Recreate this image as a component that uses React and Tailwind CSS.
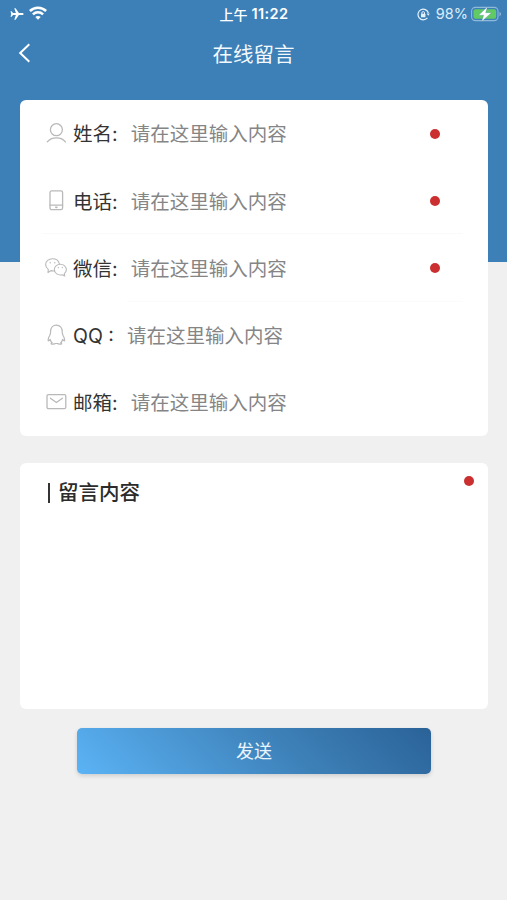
const iconProps = {
  fill: "none",
  stroke: "#b9b9b9",
  strokeWidth: 1.3,
  strokeLinecap: "round",
  strokeLinejoin: "round",
};

const UserIcon = () => (
  <svg width="22" height="22" viewBox="0 0 22 22" {...iconProps}>
    <circle cx="11.400" cy="6.700" r="6" />
    <path d="M2.300 18.900c2-2.700 5.100-4.100 9.100-4.100s7.100 1.400 9 4.100" />
  </svg>
);

const PhoneIcon = () => (
  <svg width="22" height="22" viewBox="0 0 22 22" {...iconProps}>
    <rect x="5" y=".9" width="12.600" height="18.800" rx="1.600" />
    <path d="M5 15.100h12.600" />
    <path d="M10.600 17.200h1.500l-.7.500z" />
  </svg>
);

const WechatIcon = () => (
  <svg width="22" height="22" viewBox="0 0 22 22" {...iconProps} strokeWidth={1.1}>
    <path d="M9.700 13.900c-1 .2-2.200.1-3.500-.3L3 15.400l.3-3C1.500 11.100.6 9.400.6 7.600.6 4.200 3.800 1.700 7.400 1.700c3.400 0 6.200 2 6.900 4.900" />
    <path d="M15.300 7.300c3.400 0 6.100 2.400 6.100 5.300 0 1.600-.8 3-2.100 4l.4 2.400-2.400-1.300c-4.300 1-8-1.500-8-5.100 0-2.900 2.600-5.300 6-5.300z" />
    <path d="M5.200 5.300v.6M9.800 5.300v.6M13.300 10.400v.4M17.300 10.400v.4" />
  </svg>
);

const QqIcon = () => (
  <svg width="22" height="22" viewBox="0 0 22 22" {...iconProps} strokeWidth={1.200}>
    <path d="M11.400 1.200c-3.500 0-5.800 2.600-5.800 6.200 0 1.700-.1 2.500-.8 3.900-1.200 2.200-1.900 3.900-1.700 5.100.2.900 1.200.4 2.100-1 .3 1.400.9 2.500 1.900 3.300-.8.300-1.100.7-.9 1.100.4.500 3.200.6 4.200-.3h2c1 .9 3.800.8 4.200.3.200-.4-.1-.8-.9-1.100 1-.8 1.600-1.900 1.900-3.300.9 1.400 1.900 1.900 2.100 1 .2-1.200-.5-2.900-1.700-5.100-.7-1.400-.8-2.200-.8-3.900 0-3.600-2.300-6.200-5.800-6.200z" />
  </svg>
);

const MailIcon = () => (
  <svg width="22" height="22" viewBox="0 0 22 22" {...iconProps}>
    <rect x="2" y="3.700" width="18.800" height="14" rx="1.400" />
    <path d="M5.400 7.200l6 4.300 6-4.300" />
  </svg>
);

const fields = [
  { label: "姓名:", icon: UserIcon, required: true },
  { label: "电话:", icon: PhoneIcon, required: true },
  { label: "微信:", icon: WechatIcon, required: true },
  { label: "QQ :", icon: QqIcon, required: false },
  { label: "邮箱:", icon: MailIcon, required: false },
];

const StatusBar = () => (
  <div className="grid h-7 grid-cols-3 items-center text-white">
    <div className="flex items-center gap-[5px] pl-[10px]">
      <svg width="14" height="14" viewBox="0 0 14 14" fill="#fff">
        <path d="M13.700 7c0-.7-.9-1.100-1.900-1.100H8.900L5.600 1.200H4.300l1.600 4.700H3L1.600 4.200H.5L1.300 7 .5 9.800h1.100L3 8.100h2.900l-1.600 4.700h1.300l3.300-4.700h2.900c1 0 1.900-.4 1.900-1.100z" />
      </svg>
      <svg className="-mt-[2px]" width="18" height="14" viewBox="0 0 18 14" fill="none" stroke="#fff" strokeWidth="2.500">
        <path d="M.9 5c4.600-4.500 11.600-4.500 16.200 0" />
        <path d="M3.900 8.300c2.900-2.800 7.300-2.800 10.200 0" />
        <path d="M9 13.800L6.300 11c1.500-1.400 3.900-1.400 5.400 0z" fill="#fff" stroke="none" />
      </svg>
    </div>
    <div className="flex items-center justify-center gap-[4px] whitespace-nowrap pl-px text-[14px] font-semibold">
      <span className="font-medium">上午</span>
      <span className="text-[14.500px] tracking-[0.4px]">11:22</span>
    </div>
    <div className="flex items-center justify-end pr-[5px]">
      <svg width="13" height="13" viewBox="0 0 13 13" fill="none" stroke="#e4f1fb" strokeWidth="1.200">
        <path d="M10.400 9.900A5.300 5.300 0 1 1 11.400 5" />
        <path d="M9.600 5.600h3.200l-1.500 2.200z" fill="#e4f1fb" stroke="none" />
        <rect x="4" y="5.800" width="4.400" height="3.400" rx=".5" fill="#e4f1fb" stroke="none" />
        <path d="M4.900 6V4.900a1.300 1.300 0 0 1 2.600 0V6" strokeWidth="1" />
      </svg>
      <span className="ml-[6px] text-[14.500px] text-[#dcecf8]">98%</span>
      <svg className="-mt-px ml-[3px]" width="31" height="16" viewBox="0 0 31 16">
        <rect x=".6" y="1.400" width="26.400" height="13.200" rx="3.800" fill="none" stroke="#8fb8d9" strokeWidth="1.100" />
        <rect x="2.500" y="3.300" width="22.600" height="9.400" rx="2" fill="#62ca62" />
        <path d="M28.500 6v4.200c.9-.3 1.500-1.100 1.500-2.100S29.400 6.300 28.500 6z" fill="#8fb8d9" />
        <path d="M16.400.8L7.600 9.200h5.100l-2.200 6.500L20.400 6.700h-5.700z" fill="#fff" stroke="#3d80b8" strokeWidth=".3" />
      </svg>
    </div>
  </div>
);

const Field = ({ label, icon: Icon, required }) => (
  <label className="flex h-[67.200px] items-center pl-[25px] pr-[48px] text-[19.500px]">
    <Icon />
    <span className="ml-[6px] mt-[3px] whitespace-pre text-[#333]">{label}</span>
    <input
      type="text"
      placeholder="请在这里输入内容"
      className="ml-[13px] mt-[3px] min-w-0 flex-1 outline-none placeholder:text-[#858585]"
    />
    {required && <span className="size-[10px] rounded-full bg-[#cb2f2f]" />}
  </label>
);

const App = () => {
  return (
    <div className="h-[900px] w-[507px] overflow-hidden bg-[#f0f0f0] font-['Inter','Noto_Sans_CJK_SC',sans-serif]">
      <header className="h-[262px] bg-[#3d80b8]">
        <StatusBar />
        <div className="grid h-[52px] grid-cols-[1fr_auto_1fr] items-center text-white">
          <svg className="-mt-[2px] ml-[18px]" width="14" height="20" viewBox="0 0 14 20" fill="none" stroke="#fff" strokeWidth="2">
            <path d="M11.300 1.200L2.200 10l9.100 8.800" />
          </svg>
          <h1 className="mt-[2px] text-[20.500px] text-[#f4f9fd]">在线留言</h1>
        </div>
      </header>

      <form className="-mt-[162px] flex flex-col px-5">
        <div className="h-[336px] w-[468px] rounded-[6px] bg-white">
          {fields.map((field, index) => (
            <div key={field.label}>
              <Field {...field} />
              {index === 1 && <hr className="-mt-px ml-[22px] mr-[25px] border-[#fafafa]" />}
              {index === 2 && <hr className="-mt-px ml-[107px] mr-[25px] border-[#fbfbfb]" />}
            </div>
          ))}
        </div>

        <div className="mt-[27px] flex h-[246px] w-[468px] items-start justify-between rounded-[6px] bg-white pl-[28px] pr-[14px]">
          <h2 className="mt-[15px] flex items-center text-[20.500px] font-medium text-[#2b2b2b]">
            <span className="mr-[8px] h-[20px] w-[2px] bg-[#333]" />
            留言内容
          </h2>
          <span className="mt-[13px] size-[10px] rounded-full bg-[#cb2f2f]" />
        </div>

        <button
          type="button"
          className="ml-[57px] mt-[19px] h-[46px] w-[354px] rounded-[5px] bg-[linear-gradient(45deg,#5bb3f5,#3d80b8_60%,#2a6297)] text-[18px] text-[#eaf4fc] shadow-[0_2px_4px_rgba(0,0,0,0.14)]"
        >
          发送
        </button>
      </form>
    </div>
  );
};

export default App;
